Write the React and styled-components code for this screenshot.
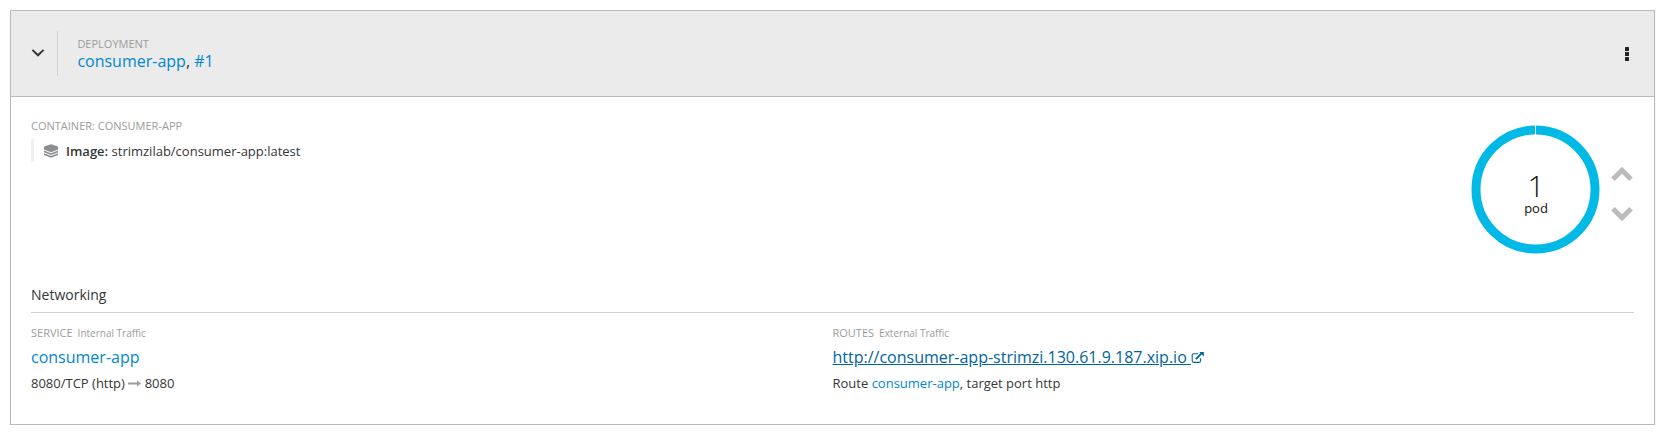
import React from "react";
import styled, { createGlobalStyle } from "styled-components";

const GlobalStyle = createGlobalStyle`
  body {
    margin: 0;
    background: #fff;
    color: #363636;
    font-family: "Open Sans", sans-serif;
    font-size: 13px;
  }
  * { box-sizing: border-box; }
`;

const Card = styled.section`
  margin: 10px 14px 0 10px;
  height: 415px;
  border: 1px solid #bbb;
  box-shadow: 0 1px 1px rgba(0, 0, 0, 0.175);
`;

const Header = styled.header`
  display: flex;
  align-items: center;
  height: 86px;
  padding: 20px;
  background: #ebebeb;
  border-bottom: 1px solid #bbb;
`;

const Toggle = styled.button`
  display: flex;
  align-items: center;
  width: 27px;
  height: 45px;
  padding: 0 0 1px;
  border: 0;
  border-right: 1px solid #d1d1d1;
  background: none;
  color: #363636;
`;

const Heading = styled.div`
  flex: 1;
  padding: 0 0 1px 19.4px;
`;

const Label = styled.div`
  color: #9c9c9c;
  font-size: 11px;
  line-height: 16px;
  white-space: pre;
`;

const Small = styled.span`
  margin-left: 5px;
  font-size: 10px;
`;

const Link = styled.a`
  color: ${(p) => (p.$active ? "#00659c" : "#0088ce")};
  text-decoration: ${(p) => (p.$active ? "underline" : "none")};
`;

const Title = styled.div`
  font-size: 16px;
  line-height: 18px;
`;

const Kebab = styled.button`
  display: flex;
  padding: 0;
  margin-right: 5px;
  border: 0;
  background: none;
  color: #222;
`;

const Body = styled.div`
  padding: 21px 20px 0;
`;

const Overview = styled.div`
  display: flex;
  justify-content: space-between;
  height: 166px;
`;

const ImageRow = styled.div`
  display: flex;
  align-items: center;
  height: 23px;
  margin-top: 5px;
  padding-left: 10px;
  border-left: 3px solid #f1f1f1;
  line-height: 21px;

  svg { margin: 0 8px 0 0; }
`;

const ImageText = styled.div`
  padding-top: 2px;
`;

const Strong = styled.b`
  font-weight: 600;
`;

const Scaling = styled.div`
  display: flex;
  align-items: flex-start;
`;

const Donut = styled.div`
  display: grid;
  place-items: center;
  width: 130px;
  height: 130px;
  margin: 7px 10px 0 0;

  > * { grid-area: 1 / 1; }
`;

const PodCount = styled.div`
  text-align: center;
  color: #111;
  padding: 5px 0 0 0;
`;

const Count = styled.div`
  font-size: 30px;
  font-weight: 300;
  line-height: 34px;
`;

const Unit = styled.div`
  margin-top: -3px;
  font-size: 13px;
  line-height: 16px;
`;

const Arrows = styled.div`
  display: flex;
  flex-direction: column;
  gap: 26px;
  margin: 49px 1px 0 0;
  color: #bbb;

  svg { display: block; }
`;

const SectionTitle = styled.h3`
  height: 29px;
  margin: 0;
  border-bottom: 1px solid #d1d1d1;
  font-size: 14px;
  font-weight: 400;
  line-height: 22px;
`;

const Columns = styled.div`
  display: grid;
  grid-template-columns: 1fr 1fr;
  padding-top: 12px;
`;

const Resource = styled.div`
  font-size: 16px;
  line-height: 24px;
  margin-top: 4px;
`;

const Detail = styled.div`
  display: flex;
  align-items: center;
  line-height: 20px;
  margin-top: 4px;
  white-space: pre;
`;

const Chevron = ({ up }) => (
  <svg width="22" height="14" viewBox="0 0 22 14" fill="none" stroke="currentColor" strokeWidth="5">
    <path d={up ? "M2 12.2 11 3.3 20 12.2" : "M2 1.8 11 10.7 20 1.8"} />
  </svg>
);

export default function App() {
  return (
    <>
      <GlobalStyle />
      <Card>
        <Header>
          <Toggle aria-label="Collapse">
            <svg width="14" height="10" viewBox="0 0 14 10" fill="none" stroke="currentColor" strokeWidth="2">
              <path d="M1.4 1.9 7 7.3 12.6 1.9" />
            </svg>
          </Toggle>
          <Heading>
            <Label>DEPLOYMENT</Label>
            <Title><Link>consumer-app</Link>, <Link>#1</Link></Title>
          </Heading>
          <Kebab aria-label="Actions">
            <svg width="4" height="14" viewBox="0 0 4 14" fill="currentColor">
              <rect width="4" height="4" rx="0.5" />
              <rect y="5" width="4" height="4" rx="0.5" />
              <rect y="10" width="4" height="4" rx="0.5" />
            </svg>
          </Kebab>
        </Header>
        <Body>
          <Overview>
            <div>
              <Label>CONTAINER: CONSUMER-APP</Label>
              <ImageRow>
                <svg width="14" height="14" viewBox="0 0 14 14" fill="#8b8d8f">
                  <path d="M0 2.6 7 .2 14 2.6V5.6L7 8.3 0 5.6z" />
                  <path d="M0 6.6 7 9.3 14 6.6V8.3L7 11 0 8.3z" />
                  <path d="M0 9.2 7 11.9 14 9.2V11L7 13.7 0 11z" />
                </svg>
                <ImageText><Strong>Image:</Strong> strimzilab/consumer-app:latest</ImageText>
              </ImageRow>
            </div>
            <Scaling>
              <Donut>
                <svg width="130" height="130" viewBox="0 0 130 130">
                  <circle cx="64.5" cy="64.5" r="59.5" fill="none" stroke="#00b9e4" strokeWidth="9" />
                  <path d="M64.5 0V11" stroke="#fff" />
                </svg>
                <PodCount>
                  <Count>1</Count>
                  <Unit>pod</Unit>
                </PodCount>
              </Donut>
              <Arrows>
                <Chevron up />
                <Chevron />
              </Arrows>
            </Scaling>
          </Overview>
          <SectionTitle>Networking</SectionTitle>
          <Columns>
            <div>
              <Label>SERVICE<Small>Internal Traffic</Small></Label>
              <Resource><Link>consumer-app</Link></Resource>
              <Detail>
                {"8080/TCP (http) "}
                <svg width="13" height="7" viewBox="0 0 13 7" fill="#9c9c9c">
                  <path d="M0 2.6H9V.5L13 3.5 9 6.5V4.4H0z" />
                </svg>
                {" 8080"}
              </Detail>
            </div>
            <div>
              <Label>ROUTES<Small>External Traffic</Small></Label>
              <Resource>
                <Link $active>
                  http://consumer-app-strimzi.130.61.9.187.xip.io{" "}
                  <svg width="13" height="11" viewBox="-0.6 0 13 11" fill="none" stroke="currentColor" strokeWidth="1.1">
                    <path d="M6.6 1.7H2.2Q.6 1.7.6 3.3V8.8Q.6 10.4 2.2 10.4H7.4Q9 10.4 9 8.8V6.2" />
                    <path d="M4.2 7.2 10 1.4" strokeWidth="1.8" />
                    <path d="M7.7 0H12.3V4.6z" fill="currentColor" stroke="none" />
                  </svg>
                </Link>
              </Resource>
              <Detail>Route <Link>consumer-app</Link>, target port http</Detail>
            </div>
          </Columns>
        </Body>
      </Card>
    </>
  );
}
